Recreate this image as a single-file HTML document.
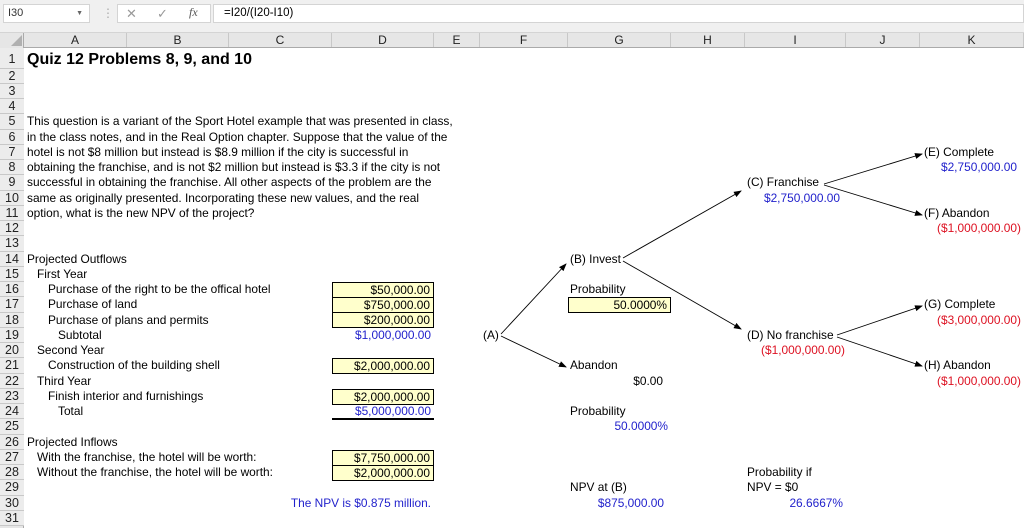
<!DOCTYPE html>
<html><head><meta charset="utf-8"><style>
*{margin:0;padding:0;box-sizing:border-box}
body{width:1024px;height:528px;overflow:hidden;background:#fff;font-family:"Liberation Sans",Arial,sans-serif;font-size:11.9px;color:#000;position:relative}
.a{position:absolute;white-space:nowrap;line-height:15px}
.r{text-align:right}
.b{color:#2222cc}
.red{color:#dd1122}
.y{background:#ffffcc;border:1px solid #000;padding-right:3px;text-align:right;line-height:14px}
.rn{position:absolute;left:0;width:24px;text-align:center;font-size:12.5px;color:#222;border-bottom:1px solid #c8c8c8;background:#ececec;line-height:15px}
.ch{position:absolute;top:33px;height:14px;text-align:center;font-size:12px;color:#222;border-right:1px solid #c8c8c8;line-height:14px}
</style></head><body>
<div style="position:absolute;left:0;top:0;width:1024px;height:33px;background:#f0f0f0;border-bottom:1px solid #d4d4d4"></div>
<div style="position:absolute;left:3px;top:4px;width:87px;height:19px;background:#fff;border:1px solid #d4d4d4;font-size:11px;line-height:17px;padding-left:4px;color:#333">I30<span style="position:absolute;right:6px;font-size:7px;color:#666">▼</span></div>
<div class="a" style="left:102px;top:6px;color:#aaa">⋮</div>
<div style="position:absolute;left:117px;top:4px;width:94px;height:19px;background:#fff;border:1px solid #d4d4d4"></div>
<div class="a" style="left:126px;top:6px;color:#999;font-size:13px">✕</div>
<div class="a" style="left:157px;top:6px;color:#999;font-size:13px">✓</div>
<div class="a" style="left:189px;top:5px;color:#555;font-family:'Liberation Serif',serif;font-style:italic;font-size:12px">fx</div>
<div style="position:absolute;left:213px;top:4px;width:811px;height:19px;background:#fff;border:1px solid #d4d4d4;font-size:11.5px;line-height:17px;padding-left:10px">=I20/(I20-I10)</div>
<div style="position:absolute;left:0;top:33px;width:1024px;height:15px;background:#e6e6e6;border-bottom:1px solid #aaa"></div>
<div style="position:absolute;left:0;top:33px;width:24px;height:495px;background:#e6e6e6;border-right:1px solid #aaa"></div>
<svg style="position:absolute;left:8px;top:35px" width="14" height="11"><polygon points="14,0 14,11 3,11" fill="#b0b0b0"/></svg>
<div class="ch" style="left:24px;width:103px">A</div>
<div class="ch" style="left:127px;width:102px">B</div>
<div class="ch" style="left:229px;width:103px">C</div>
<div class="ch" style="left:332px;width:102px">D</div>
<div class="ch" style="left:434px;width:46px">E</div>
<div class="ch" style="left:480px;width:88px">F</div>
<div class="ch" style="left:568px;width:103px">G</div>
<div class="ch" style="left:671px;width:74px">H</div>
<div class="ch" style="left:745px;width:101px">I</div>
<div class="ch" style="left:846px;width:74px">J</div>
<div class="ch" style="left:920px;width:104px">K</div>
<div class="rn" style="top:48px;height:21px;line-height:22px">1</div>
<div id="rows"></div>
<script>
var h='';for(var n=2;n<=31;n++){var t=68.5+(n-2)*15.25;h+='<div class="rn" style="top:'+t+'px;height:15.25px">'+n+'</div>';}
document.getElementById('rows').outerHTML=h;
</script>
<div class="a" style="left:27px;top:51px;font-size:16px;font-weight:bold;line-height:18px">Quiz 12 Problems 8, 9, and 10</div>
<div class="a" style="left:27px;top:114px">This question is a variant of the Sport Hotel example that was presented in class,</div>
<div class="a" style="left:27px;top:129.5px">in the class notes, and in the Real Option chapter. Suppose that the value of the</div>
<div class="a" style="left:27px;top:144.75px">hotel is not $8 million but instead is $8.9 million if the city is successful in</div>
<div class="a" style="left:27px;top:160px">obtaining the franchise, and is not $2 million but instead is $3.3 if the city is not</div>
<div class="a" style="left:27px;top:175.25px">successful in obtaining the franchise. All other aspects of the problem are the</div>
<div class="a" style="left:27px;top:190.5px">same as originally presented. Incorporating these new values, and the real</div>
<div class="a" style="left:27px;top:205.75px">option, what is the new NPV of the project?</div>
<div class="a" style="left:27px;top:251.5px">Projected Outflows</div>
<div class="a" style="left:37px;top:266.75px">First Year</div>
<div class="a" style="left:48px;top:282px">Purchase of the right to be the offical hotel</div>
<div class="a" style="left:48px;top:297.25px">Purchase of land</div>
<div class="a" style="left:48px;top:312.5px">Purchase of plans and permits</div>
<div class="a" style="left:58px;top:327.75px">Subtotal</div>
<div class="a" style="left:37px;top:343px">Second Year</div>
<div class="a" style="left:48px;top:358.25px">Construction of the building shell</div>
<div class="a" style="left:37px;top:373.5px">Third Year</div>
<div class="a" style="left:48px;top:388.75px">Finish interior and furnishings</div>
<div class="a" style="left:58px;top:404px">Total</div>
<div class="a" style="left:27px;top:434.5px">Projected Inflows</div>
<div class="a" style="left:37px;top:449.75px">With the franchise, the hotel will be worth:</div>
<div class="a" style="left:37px;top:465px">Without the franchise, the hotel will be worth:</div>
<div class="a y" style="left:332px;top:282px;width:102px;height:16px">$50,000.00</div>
<div class="a y" style="left:332px;top:297px;width:102px;height:16px">$750,000.00</div>
<div class="a y" style="left:332px;top:312px;width:102px;height:16px">$200,000.00</div>
<div class="a r b" style="left:320px;top:327.75px;width:111px">$1,000,000.00</div>
<div class="a y" style="left:332px;top:358px;width:102px;height:16px">$2,000,000.00</div>
<div class="a y" style="left:332px;top:388.5px;width:102px;height:16px">$2,000,000.00</div>
<div class="a r b" style="left:320px;top:403.5px;width:111px">$5,000,000.00</div>
<div style="position:absolute;left:332px;top:418px;width:102px;height:2px;background:#000"></div>
<div class="a y" style="left:332px;top:449.5px;width:102px;height:16px">$7,750,000.00</div>
<div class="a y" style="left:332px;top:465px;width:102px;height:16px">$2,000,000.00</div>
<div class="a r b" style="left:260px;top:495.5px;width:171px">The NPV is $0.875 million.</div>
<svg style="position:absolute;left:0;top:0" width="1024" height="528">
<defs><marker id="m" markerWidth="8" markerHeight="6" refX="7" refY="3" orient="auto" markerUnits="userSpaceOnUse"><polygon points="0,0 8,3 0,6" fill="#000"/></marker></defs>
<g stroke="#000" stroke-width="0.9" marker-end="url(#m)">
<line x1="501" y1="334" x2="566" y2="264"/>
<line x1="501" y1="336" x2="566" y2="367"/>
<line x1="623" y1="258" x2="741" y2="191"/>
<line x1="623" y1="261" x2="741" y2="329"/>
<line x1="824" y1="184" x2="922" y2="154"/>
<line x1="824" y1="185" x2="922" y2="215"/>
<line x1="837" y1="335" x2="922" y2="306"/>
<line x1="837" y1="337" x2="922" y2="366"/>
</g></svg>
<div class="a" style="left:483px;top:327.75px">(A)</div>
<div class="a" style="left:570px;top:251.5px">(B) Invest</div>
<div class="a" style="left:570px;top:282px">Probability</div>
<div class="a y" style="left:568px;top:297px;width:103px;height:16px">50.0000%</div>
<div class="a" style="left:570px;top:358.25px">Abandon</div>
<div class="a r" style="left:568px;top:373.5px;width:95px">$0.00</div>
<div class="a" style="left:570px;top:404px">Probability</div>
<div class="a r b" style="left:568px;top:419.25px;width:100px">50.0000%</div>
<div class="a" style="left:570px;top:480.25px">NPV at (B)</div>
<div class="a r b" style="left:560px;top:495.5px;width:104px">$875,000.00</div>
<div class="a" style="left:747px;top:175.25px">(C) Franchise</div>
<div class="a r b" style="left:735px;top:190.5px;width:105px">$2,750,000.00</div>
<div class="a" style="left:747px;top:327.75px">(D) No franchise</div>
<div class="a r red" style="left:735px;top:343px;width:110px">($1,000,000.00)</div>
<div class="a" style="left:747px;top:465px">Probability if</div>
<div class="a" style="left:747px;top:480.25px">NPV = $0</div>
<div class="a r b" style="left:745px;top:495.5px;width:98px">26.6667%</div>
<div class="a" style="left:924px;top:144.75px">(E) Complete</div>
<div class="a r b" style="left:910px;top:160px;width:107px">$2,750,000.00</div>
<div class="a" style="left:924px;top:205.75px">(F) Abandon</div>
<div class="a r red" style="left:910px;top:221px;width:111px">($1,000,000.00)</div>
<div class="a" style="left:924px;top:297.25px">(G) Complete</div>
<div class="a r red" style="left:910px;top:312.5px;width:111px">($3,000,000.00)</div>
<div class="a" style="left:924px;top:358.25px">(H) Abandon</div>
<div class="a r red" style="left:910px;top:373.5px;width:111px">($1,000,000.00)</div>
</body></html>
